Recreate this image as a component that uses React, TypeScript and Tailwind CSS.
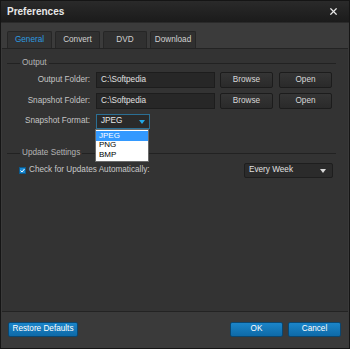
import { X } from "lucide-react";

const FONT = { fontFamily: '"Liberation Sans", Arial, sans-serif' };

function Legend({ label }: { label: string }) {
  return (
    <div className="flex items-center h-[10px] pl-[5px] pr-[12px]">
      <div className="w-[13px] h-px bg-[#222]" />
      <span className="px-[2px] text-[8.2px] text-[#b4b4b4] leading-none">{label}</span>
      <div className="flex-1 h-px bg-[#222]" />
    </div>
  );
}

function Btn({ label, w }: { label: string; w: string }) {
  return (
    <button
      className={`${w} h-[16px] shrink-0 flex items-center justify-center rounded-[2px] border border-[#1c1c1c] bg-gradient-to-b from-[#353535] to-[#2a2a2a] text-[8.2px] text-[#d8d8d8] leading-none`}
    >
      {label}
    </button>
  );
}

function BlueBtn({ label, w }: { label: string; w: string }) {
  return (
    <button
      className={`${w} h-[15px] shrink-0 flex items-center justify-center rounded-[2px] border border-[#0a4670] bg-gradient-to-b from-[#1b85c9] to-[#0e6aa8] text-[8.2px] text-white leading-none`}
    >
      {label}
    </button>
  );
}

function FolderRow({ label }: { label: string }) {
  return (
    <div className="flex items-center h-[16px] gap-[5px]">
      <span className="w-[88px] shrink-0 text-right text-[8.2px] text-[#c4c4c4] whitespace-nowrap">{label}</span>
      <div className="ml-px w-[119px] h-[16px] shrink-0 flex items-center pl-[4px] bg-[#272727] border border-[#1d1d1d] text-[8.2px] text-[#e0e0e0]">
        C:\Softpedia
      </div>
      <Btn label="Browse" w="w-[53px]" />
      <div className="ml-px">
        <Btn label="Open" w="w-[53px]" />
      </div>
    </div>
  );
}

export default function App() {
  const tabs = [
    { name: "General", w: "w-[45px]" },
    { name: "Convert", w: "w-[45px]" },
    { name: "DVD", w: "w-[44px]" },
    { name: "Download", w: "w-[46px]" },
  ];

  return (
    <div style={FONT} className="w-[350px] h-[349px] flex flex-col bg-[#3a3a3a] border border-[#151515] overflow-hidden">
      {/* Title bar */}
      <div className="h-[21px] shrink-0 flex items-center justify-between pl-[6px] pr-[10px] bg-gradient-to-b from-[#2a2a2a] to-[#1b1b1b]">
        <span className="text-[10px] font-bold text-[#e8e8e8]">Preferences</span>
        <X size={11} strokeWidth={2.6} className="text-[#e8e8e8]" />
      </div>

      {/* Tabs */}
      <div className="h-[26px] shrink-0 flex items-end gap-[3px] pl-[6px] bg-[#3b3b3b] border-t border-[#2a2a2a]">
        {tabs.map((t, i) => (
          <div
            key={t.name}
            className={`${t.w} h-[17px] flex items-center justify-center rounded-t-[2px] border border-b-0 border-[#262626] text-[8.2px] leading-none ${
              i === 0 ? "bg-[#323232] text-[#2d9be0]" : "bg-[#303030] text-[#d0d0d0]"
            }`}
          >
            {t.name}
          </div>
        ))}
      </div>

      {/* Panel */}
      <div className="flex-1 mx-[1px] bg-[#333333] border-t border-b border-[#232323] pt-[9px]">
        <Legend label="Output" />
        <div className="mt-[4px] flex flex-col gap-[5px]">
          <FolderRow label="Output Folder:" />
          <FolderRow label="Snapshot Folder:" />
          <div className="flex items-center h-[15px]">
            <span className="w-[88px] shrink-0 text-right text-[8.2px] text-[#c4c4c4] whitespace-nowrap">Snapshot Format:</span>
            <div className="relative ml-[6px]">
              <div className="w-[54px] h-[15px] flex items-center justify-between px-[4px] bg-[#2a2a2a] border border-[#2b6f94] text-[8.2px] text-[#e8e8e8]">
                <span>JPEG</span>
                <svg width="6" height="4" viewBox="0 0 6 4">
                  <path d="M0 0 L6 0 L3 4 Z" fill="#22a8e8" />
                </svg>
              </div>
              <div className="absolute left-[-1px] top-[15px] z-10 w-[54px] bg-white border border-[#6a6a6a] py-px text-[8px] text-black leading-none">
                <div className="h-[9.5px] flex items-center pl-[3px] bg-[#3399ff] text-white">JPEG</div>
                <div className="h-[9.5px] flex items-center pl-[3px]">PNG</div>
                <div className="h-[9.5px] flex items-center pl-[3px]">BMP</div>
              </div>
            </div>
          </div>
        </div>

        <div className="mt-[19px]">
          <Legend label="Update Settings" />
        </div>
        <div className="mt-[5px] flex items-center h-[15px] pl-[17px] pr-[15px]">
          <div className="w-[7px] h-[7px] shrink-0 flex items-center justify-center bg-[#1a8ad4] border border-[#0d5a8c]">
            <svg width="5" height="5" viewBox="0 0 5 5">
              <path d="M0.5 2.5 L2 4 L4.5 1" stroke="white" strokeWidth="1" fill="none" />
            </svg>
          </div>
          <span className="ml-[3px] w-[130px] text-[8.2px] text-[#c8c8c8] whitespace-nowrap">Check for Updates Automatically:</span>
          <div className="flex-1 flex justify-end">
            <div className="w-[89px] min-w-[89px] h-[15px] flex items-center justify-between pl-[4px] pr-[6px] rounded-[2px] bg-[#2b2b2b] border border-[#1e1e1e] text-[8.2px] text-[#e0e0e0]">
              <span>Every Week</span>
              <svg width="6" height="4" viewBox="0 0 6 4">
                <path d="M0 0 L6 0 L3 4 Z" fill="#d8d8d8" />
              </svg>
            </div>
          </div>
        </div>
      </div>

      {/* Footer */}
      <div className="h-[36px] shrink-0 flex items-center pl-[7px] pr-[8px] pb-[1px]">
        <BlueBtn label="Restore Defaults" w="w-[70px]" />
        <div className="ml-auto flex gap-[5px]">
          <BlueBtn label="OK" w="w-[53px]" />
          <BlueBtn label="Cancel" w="w-[53px]" />
        </div>
      </div>
    </div>
  );
}
